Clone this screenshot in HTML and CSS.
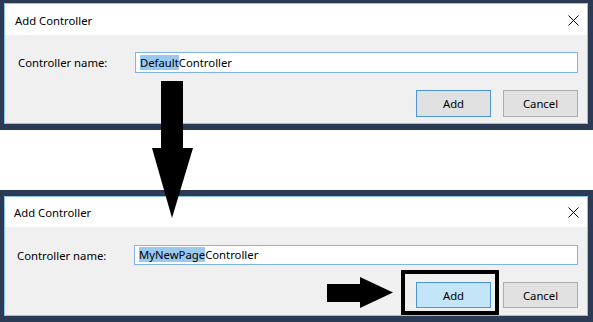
FILE: index.html
```html
<!DOCTYPE html>
<html lang="en">
<head>
    <meta charset="UTF-8">
    <meta name="viewport" content="width=device-width, initial-scale=1.0">
    <title>Add Controller</title>
    <link rel="stylesheet" href="styles.css">
</head>
<body>

<div class="page">
    <div class="window window-first">
        <div class="dialog">
            <div class="dialog-title">
                <span>Add Controller</span>
                <svg class="close" width="11" height="11" viewBox="0 0 11 11">
                    <path d="M0.5 0.5 L10.5 10.5 M10.5 0.5 L0.5 10.5" stroke="#000" stroke-width="1"/>
                </svg>
            </div>
            <div class="dialog-body">
                <div class="field-row">
                    <label class="field-label">Controller name:</label>
                    <div class="field"><span class="selected">Default</span>Controller</div>
                </div>
                <div class="buttons">
                    <button class="btn btn-default">Add</button>
                    <button class="btn">Cancel</button>
                </div>
            </div>
        </div>
    </div>

    <div class="window window-second">
        <div class="dialog">
            <div class="dialog-title">
                <span>Add Controller</span>
                <svg class="close" width="11" height="11" viewBox="0 0 11 11">
                    <path d="M0.5 0.5 L10.5 10.5 M10.5 0.5 L0.5 10.5" stroke="#000" stroke-width="1"/>
                </svg>
            </div>
            <div class="dialog-body">
                <div class="field-row">
                    <label class="field-label">Controller name:</label>
                    <div class="field"><span class="selected">MyNewPage</span>Controller</div>
                </div>
                <div class="buttons">
                    <button class="btn btn-default btn-hot">Add</button>
                    <button class="btn">Cancel</button>
                </div>
            </div>
        </div>
    </div>

    <!-- annotation layer drawn over both dialogs -->
    <svg class="annotations" width="593" height="322" viewBox="0 0 593 322">
        <polygon points="161,81 183,81 183,148 193,148 172,218 152,148 161,148" fill="#000"/>
        <polygon points="327,284 360,284 360,277 393,292.5 360,308 360,302 327,302" fill="#000"/>
        <rect x="403" y="272" width="94" height="41" fill="none" stroke="#000" stroke-width="4"/>
    </svg>
</div>

</body>
</html>
```

FILE: styles.css
```css
body {
    margin: 0;
    background-color: #fff;
    font-family: "Noto Sans", "Open Sans", sans-serif;
    font-size: 11.3px;
    color: #000;
}
.page {
    position: relative;
    width: 593px;
    height: 322px;
    overflow: hidden;
}
.window {
    background-color: #2b3a55;
    padding: 6px 5px 6px 4px;
}
.window-first {
    padding-top: 3px;
}
.window-second {
    margin-top: 60px;
}
.dialog {
    border: 1px solid #8cc3e8;
}
.dialog-title {
    height: 31px;
    background-color: #fff;
    display: flex;
    align-items: center;
    justify-content: space-between;
    padding: 1px 8px 0 10px;
    box-sizing: border-box;
}
.window-second .dialog-title {
    height: 30px;
    padding-left: 9px;
}
.close {
    display: block;
}
.dialog-body {
    height: 88px;
    box-sizing: border-box;
    background-color: #f0f0f0;
    padding: 17px 9px 0 13px;
}
.window-second .dialog-body {
    padding-top: 18px;
    padding-left: 12px;
}
.field-row {
    display: flex;
    align-items: center;
}
.field-label {
    width: 117px;
    flex-shrink: 0;
}
.field {
    flex: 1;
    height: 21px;
    box-sizing: border-box;
    background-color: #fff;
    border: 1px solid #7eb4ea;
    padding: 0 4px;
    line-height: 19px;
    white-space: nowrap;
}
.window-second .field {
    height: 20px;
    line-height: 18px;
}
.selected {
    background-color: #99c9ef;
}
.buttons {
    display: flex;
    justify-content: flex-end;
    gap: 12px;
    margin-top: 17px;
}
.btn {
    width: 75px;
    height: 27px;
    box-sizing: border-box;
    font-family: inherit;
    font-size: 11.3px;
    background-color: #e1e1e1;
    border: 1px solid #adadad;
    padding: 0;
    color: #000;
}
.window-second .btn {
    height: 26px;
}
.btn-default {
    border-color: #4c96d7;
}
.btn-hot {
    background-color: #c4e4f7;
}
.annotations {
    position: absolute;
    top: 0;
    left: 0;
}
```
